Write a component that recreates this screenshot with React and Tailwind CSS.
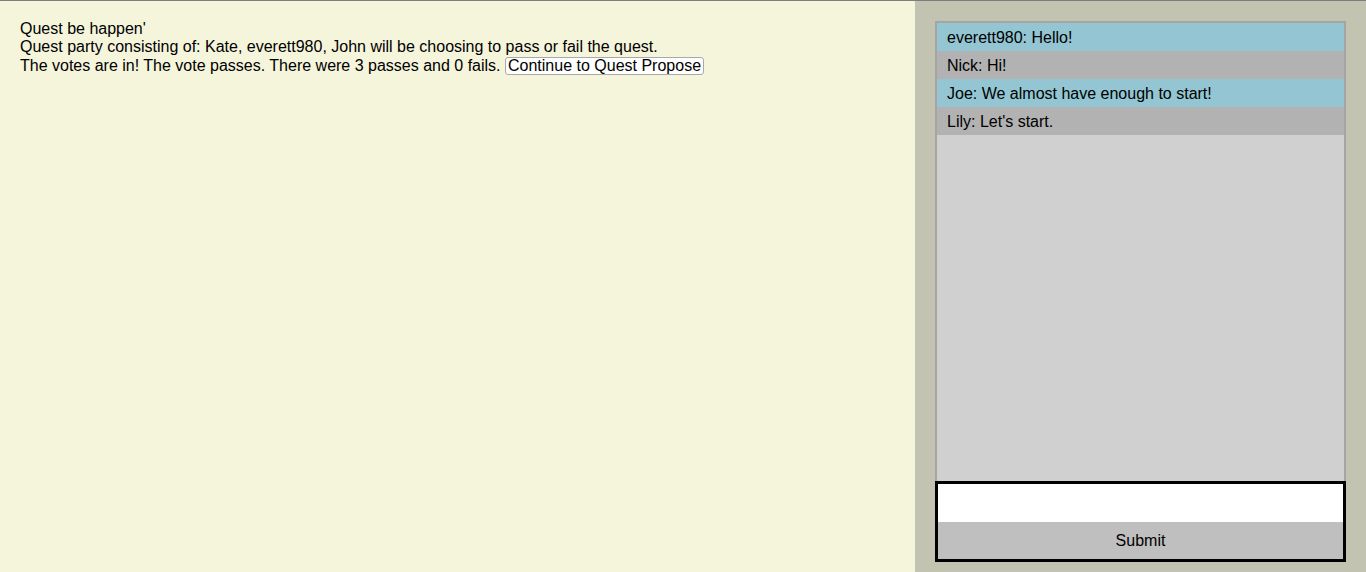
const MESSAGES = [
  { id: 1, who: 'everett980', text: 'Hello!' },
  { id: 2, who: 'Nick', text: 'Hi!' },
  { id: 3, who: 'Joe', text: 'We almost have enough to start!' },
  { id: 4, who: 'Lily', text: "Let's start." },
]

function ChatPanel() {
  return (
    <div className="flex h-full flex-col px-5 pt-5 pb-[10px]">
      <div className="flex flex-1 flex-col border-x-2 border-t-2 border-[#a5a5a3] bg-[#d0d0d0]">
        {MESSAGES.map((m, i) => (
          <div
            key={m.id}
            className={`flex h-7 items-center pt-px pl-[10px] ${i % 2 === 0 ? 'bg-[#93c6d2]' : 'bg-[#b2b2b2]'}`}
          >
            {m.who}: {m.text}
          </div>
        ))}
      </div>
      <form
        className="flex h-[81px] flex-col border-[3px] border-black"
        onSubmit={(e) => e.preventDefault()}
      >
        <input type="text" className="h-[38px] w-full bg-white px-2 outline-none" />
        <button type="submit" className="flex-1 w-full bg-[#bfbfbf] text-black">
          Submit
        </button>
      </form>
    </div>
  )
}

export default function App() {
  return (
    <div
      className="flex h-[572px] w-[1366px] border-t border-[#7d7d7d] text-[16px] text-black"
      style={{ fontFamily: '"Liberation Sans", Arial, sans-serif' }}
    >
      <div className="w-[915px] bg-[#f5f5dc] px-5 pt-[19px] leading-[18px]">
        <div>Quest be happen'</div>
        <div>Quest party consisting of: Kate, everett980, John will be choosing to pass or fail the quest.</div>
        <div className="pt-px">
          The votes are in! The vote passes. There were 3 passes and 0 fails.{' '}
          <button className="rounded-[3px] border border-[#a9a9a9] bg-white px-[2px] leading-[16px] text-black">
            Continue to Quest Propose
          </button>
        </div>
      </div>
      <div className="flex-1 bg-[#c2c3b0]">
        <ChatPanel />
      </div>
    </div>
  )
}
